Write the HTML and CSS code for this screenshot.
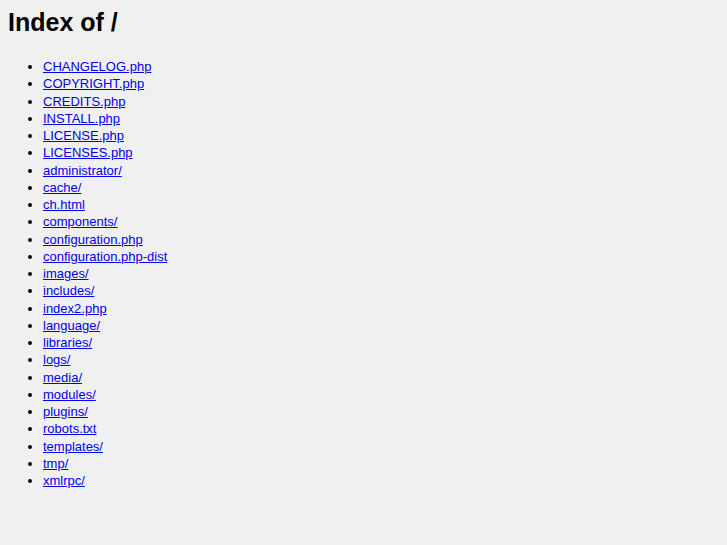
FILE: index.html
```html
<!DOCTYPE html>
<html>
<head>
    <meta charset="UTF-8">
    <title>Index of /</title>
    <link rel="stylesheet" href="styles.css">
</head>
<body>
<h1>Index of /</h1>
<ul>
<li><a href="CHANGELOG.php"> CHANGELOG.php</a></li>
<li><a href="COPYRIGHT.php"> COPYRIGHT.php</a></li>
<li><a href="CREDITS.php"> CREDITS.php</a></li>
<li><a href="INSTALL.php"> INSTALL.php</a></li>
<li><a href="LICENSE.php"> LICENSE.php</a></li>
<li><a href="LICENSES.php"> LICENSES.php</a></li>
<li><a href="administrator/"> administrator/</a></li>
<li><a href="cache/"> cache/</a></li>
<li><a href="ch.html"> ch.html</a></li>
<li><a href="components/"> components/</a></li>
<li><a href="configuration.php"> configuration.php</a></li>
<li><a href="configuration.php-dist"> configuration.php-dist</a></li>
<li><a href="images/"> images/</a></li>
<li><a href="includes/"> includes/</a></li>
<li><a href="index2.php"> index2.php</a></li>
<li><a href="language/"> language/</a></li>
<li><a href="libraries/"> libraries/</a></li>
<li><a href="logs/"> logs/</a></li>
<li><a href="media/"> media/</a></li>
<li><a href="modules/"> modules/</a></li>
<li><a href="plugins/"> plugins/</a></li>
<li><a href="robots.txt"> robots.txt</a></li>
<li><a href="templates/"> templates/</a></li>
<li><a href="tmp/"> tmp/</a></li>
<li><a href="xmlrpc/"> xmlrpc/</a></li>
</ul>
</body>
</html>
```

FILE: styles.css
```css
body {
    font-family: "Liberation Sans", Arial, sans-serif;
    font-size: 13px;
    background-color: #f0f0f0;
    color: #000;
    margin: 8px;
}
h1 {
    font-size: 25px;
    margin: 0 0 21px;
}
ul {
    margin: 0;
    padding-left: 35px;
}
li {
    line-height: 17.25px;
}
a {
    color: #0000ee;
}
```
